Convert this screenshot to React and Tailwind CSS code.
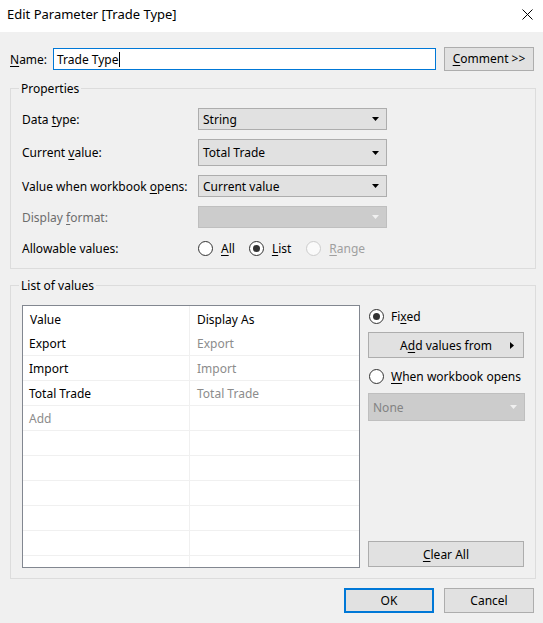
import React from "react";

const F = { fontFamily: '"Noto Sans", "Open Sans", sans-serif' };

function U({ children }) {
  return <span className="underline underline-offset-2">{children}</span>;
}

function Arrow({ disabled }) {
  return (
    <svg width="7" height="4" viewBox="0 0 7 4" className="shrink-0">
      <path d="M0 0H7L3.5 4Z" fill={disabled ? "#f0f0f0" : "#000"} />
    </svg>
  );
}

function Select({ children, h = "h-[22px]", disabled, w = "w-[189px]" }) {
  return (
    <div
      className={`${w} ${h} flex items-center justify-between pl-[4px] pr-[7px] border ${
        disabled ? "bg-[#cccccc] border-[#bfbfbf] text-[#838383]" : "bg-[#e1e1e1] border-[#adadad] text-black"
      }`}
    >
      <span className="pt-px">{children}</span>
      <Arrow disabled={disabled} />
    </div>
  );
}

function Radio({ checked, disabled }) {
  return (
    <span
      className={`w-[15px] h-[15px] rounded-full border flex items-center justify-center shrink-0 ${
        disabled ? "border-[#cccccc] bg-[#fafafa]" : "border-[#333333] bg-white"
      }`}
    >
      {checked && <span className="w-[7px] h-[7px] rounded-full bg-[#333333]" />}
    </span>
  );
}

function Btn({ children, className = "" }) {
  return (
    <div className={`flex items-center justify-center bg-[#e1e1e1] border border-[#adadad] ${className}`}>
      {children}
    </div>
  );
}

const rows = [
  ["Export", "Export"],
  ["Import", "Import"],
  ["Total Trade", "Total Trade"],
  ["Add", ""],
  ["", ""],
  ["", ""],
  ["", ""],
  ["", ""],
  ["", ""],
  ["", ""],
];

export default function App() {
  return (
    <div className="w-[543px] h-[623px] bg-[#f0f0f0] text-[12px] leading-[16px] text-black overflow-hidden" style={F}>
      {/* title bar */}
      <div className="h-[32px] bg-white flex items-center justify-between pl-[7px] pr-[10px] pb-[4px]">
        <span className="text-[13px] text-black">Edit Parameter [Trade Type]</span>
        <svg width="11" height="11" viewBox="0 0 11 11">
          <path d="M0.5 0.5L10.5 10.5M10.5 0.5L0.5 10.5" stroke="#000" strokeWidth="1" />
        </svg>
      </div>

      {/* name row */}
      <div className="flex items-center h-[24px] mt-[15px] pl-[10px]">
        <span className="w-[43px] pt-px">
          <U>N</U>ame:
        </span>
        <div className="w-[383px] h-[22px] border border-[#0078d7] bg-white flex items-center pl-[3px] pt-px">
          <span>Trade Type</span>
          <span className="w-px h-[15px] bg-black" />
        </div>
        <Btn className="ml-[8px] w-[90px] h-[24px]">
          <span>
            <U>C</U>omment &gt;&gt;
          </span>
        </Btn>
      </div>

      {/* properties */}
      <div className="relative ml-[10px] mt-[17px] w-[526px] h-[181px] border border-[#dcdcdc]">
        <span className="absolute -top-[8px] left-[8px] px-[2px] bg-[#f0f0f0]">Properties</span>
        <div className="flex flex-col pl-[11px] pt-[19px]">
          <div className="flex items-center h-[22px]">
            <span className="w-[176px] pt-px">
              Data <U>t</U>ype:
            </span>
            <Select>String</Select>
          </div>
          <div className="flex items-center h-[27px] mt-[9px]">
            <span className="w-[176px] pt-px">
              Current <U>v</U>alue:
            </span>
            <Select h="h-[27px]">Total Trade</Select>
          </div>
          <div className="flex items-center h-[22px] mt-[9px]">
            <span className="w-[176px] pt-px">
              Value when workbook <U>o</U>pens:
            </span>
            <Select>Current value</Select>
          </div>
          <div className="flex items-center h-[22px] mt-[9px]">
            <span className="w-[176px] pt-px text-[#6d6d6d]">
              Display <U>f</U>ormat:
            </span>
            <Select disabled>{""}</Select>
          </div>
          <div className="flex items-center h-[22px] mt-[9px]">
            <span className="w-[176px] pt-px">Allowable values:</span>
            <div className="flex items-center">
              <Radio />
              <span className="ml-[8px] pt-px">
                <U>A</U>ll
              </span>
              <span className="ml-[14px]">
                <Radio checked />
              </span>
              <span className="ml-[8px] pt-px">
                <U>L</U>ist
              </span>
              <span className="ml-[15px]">
                <Radio disabled />
              </span>
              <span className="ml-[8px] pt-px text-[#a0a0a0]">
                <U>R</U>ange
              </span>
            </div>
          </div>
        </div>
      </div>

      {/* list of values */}
      <div className="relative ml-[10px] mt-[16px] w-[526px] h-[294px] border border-[#dcdcdc]">
        <span className="absolute -top-[8px] left-[8px] px-[2px] bg-[#f0f0f0]">List of values</span>
        <div className="flex pl-[11px] pt-[19px]">
          <div className="w-[338px] h-[263px] border border-[#828790] bg-white overflow-hidden">
            <div className="flex h-[25px]">
              <div className="w-[167px] border-r border-[#f0f0f0] flex items-center pl-[7px] pt-[2px]">Value</div>
              <div className="flex-1 flex items-center pl-[7px] pt-[2px]">Display As</div>
            </div>
            {rows.map((r, i) => (
              <div key={i} className="flex h-[25px] border-b border-[#f0f0f0]">
                <div
                  className={`w-[167px] border-r border-[#f0f0f0] flex items-center pl-[6px] pt-[2px] ${
                    r[0] === "Add" ? "text-[#8c8c8c]" : "text-black"
                  }`}
                >
                  {r[0]}
                </div>
                <div className="flex-1 flex items-center pl-[7px] pt-[2px] text-[#8c8c8c]">{r[1]}</div>
              </div>
            ))}
          </div>
          <div className="ml-[8px] w-[156px] flex flex-col">
            <div className="flex items-center h-[16px] mt-[3px] ml-[1px]">
              <Radio checked />
              <span className="ml-[7px] pt-px">
                Fi<U>x</U>ed
              </span>
            </div>
            <Btn className="mt-[8px] h-[26px] w-[156px] relative">
              <span className="pt-px">
                A<U>d</U>d values from
              </span>
              <svg width="4" height="7" viewBox="0 0 4 7" className="absolute right-[9px] top-[9px]">
                <path d="M0 0L4 3.5L0 7Z" fill="#000" />
              </svg>
            </Btn>
            <div className="flex items-center h-[16px] mt-[10px] ml-[1px]">
              <Radio />
              <span className="ml-[7px] pt-px">
                <U>W</U>hen workbook opens
              </span>
            </div>
            <div className="mt-[9px]">
              <Select disabled h="h-[28px]" w="w-[157px]">
                None
              </Select>
            </div>
            <Btn className="mt-auto mb-px h-[26px] w-[156px]">
              <span className="pt-px">
                <U>C</U>lear All
              </span>
            </Btn>
          </div>
        </div>
      </div>

      {/* buttons */}
      <div className="flex justify-end gap-[10px] pr-[9px] mt-[9px]">
        <div className="w-[90px] h-[25px] border-2 border-[#0078d7] bg-[#e1e1e1] flex items-center justify-center pt-px">OK</div>
        <Btn className="w-[90px] h-[25px] pt-px">Cancel</Btn>
      </div>
    </div>
  );
}
